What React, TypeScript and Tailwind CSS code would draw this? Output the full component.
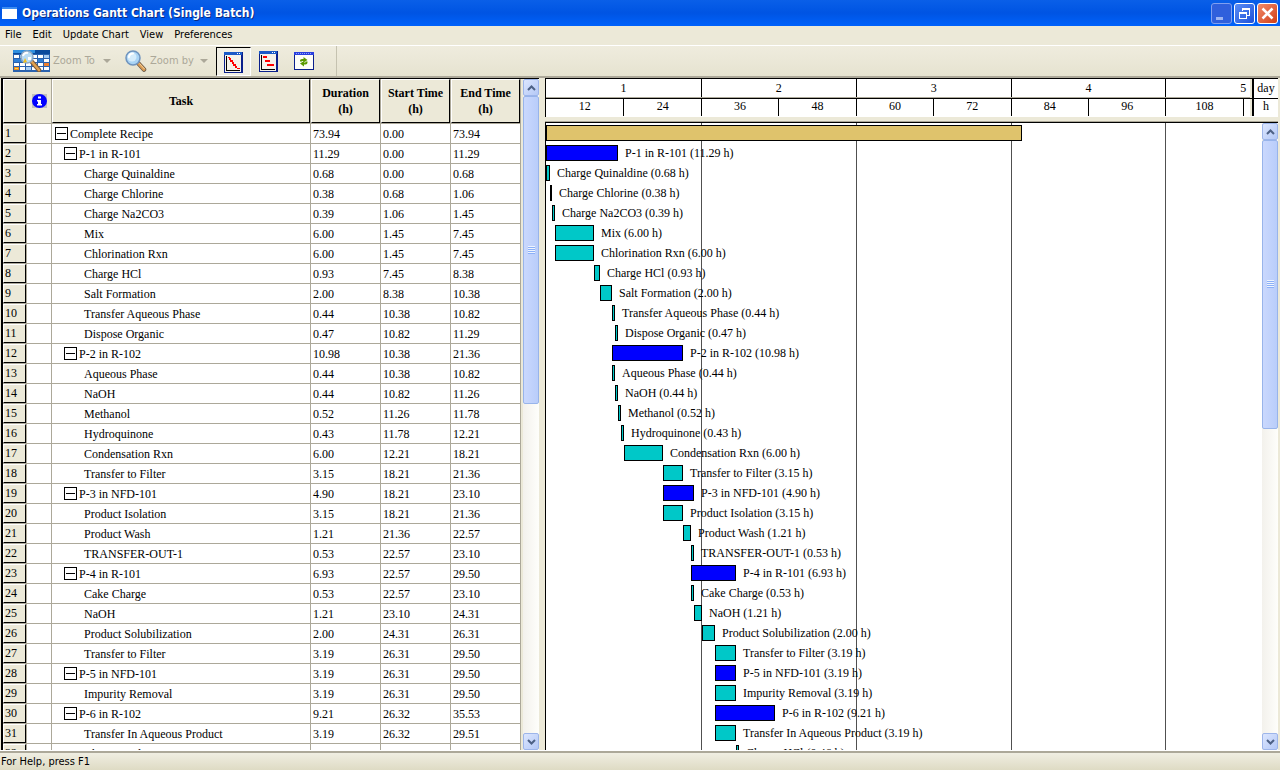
import React from 'react';

const PX_PER_HOUR = 6.45;
const HALF_DAY_WIDTH = 77.43;

interface Task {
  name: string;
  level: 0 | 1 | 2;
  duration: string;
  start: string;
  end: string;
}

const t = (level: 0 | 1 | 2, name: string, duration: string, start: string, end: string): Task => ({
  level,
  name,
  duration,
  start,
  end,
});

const TASKS: Task[] = [
  t(0, 'Complete Recipe', '73.94', '0.00', '73.94'),
  t(1, 'P-1 in R-101', '11.29', '0.00', '11.29'),
  t(2, 'Charge Quinaldine', '0.68', '0.00', '0.68'),
  t(2, 'Charge Chlorine', '0.38', '0.68', '1.06'),
  t(2, 'Charge Na2CO3', '0.39', '1.06', '1.45'),
  t(2, 'Mix', '6.00', '1.45', '7.45'),
  t(2, 'Chlorination Rxn', '6.00', '1.45', '7.45'),
  t(2, 'Charge HCl', '0.93', '7.45', '8.38'),
  t(2, 'Salt Formation', '2.00', '8.38', '10.38'),
  t(2, 'Transfer Aqueous Phase', '0.44', '10.38', '10.82'),
  t(2, 'Dispose Organic', '0.47', '10.82', '11.29'),
  t(1, 'P-2 in R-102', '10.98', '10.38', '21.36'),
  t(2, 'Aqueous Phase', '0.44', '10.38', '10.82'),
  t(2, 'NaOH', '0.44', '10.82', '11.26'),
  t(2, 'Methanol', '0.52', '11.26', '11.78'),
  t(2, 'Hydroquinone', '0.43', '11.78', '12.21'),
  t(2, 'Condensation Rxn', '6.00', '12.21', '18.21'),
  t(2, 'Transfer to Filter', '3.15', '18.21', '21.36'),
  t(1, 'P-3 in NFD-101', '4.90', '18.21', '23.10'),
  t(2, 'Product Isolation', '3.15', '18.21', '21.36'),
  t(2, 'Product Wash', '1.21', '21.36', '22.57'),
  t(2, 'TRANSFER-OUT-1', '0.53', '22.57', '23.10'),
  t(1, 'P-4 in R-101', '6.93', '22.57', '29.50'),
  t(2, 'Cake Charge', '0.53', '22.57', '23.10'),
  t(2, 'NaOH', '1.21', '23.10', '24.31'),
  t(2, 'Product Solubilization', '2.00', '24.31', '26.31'),
  t(2, 'Transfer to Filter', '3.19', '26.31', '29.50'),
  t(1, 'P-5 in NFD-101', '3.19', '26.31', '29.50'),
  t(2, 'Impurity Removal', '3.19', '26.31', '29.50'),
  t(1, 'P-6 in R-102', '9.21', '26.32', '35.53'),
  t(2, 'Transfer In Aqueous Product', '3.19', '26.32', '29.51'),
  t(2, 'Charge HCl', '0.46', '29.51', '29.97'),
];

const DAYS = [1, 2, 3, 4, 5];
const HOURS = [12, 24, 36, 48, 60, 72, 84, 96, 108, 120];
const MENUS = ['File', 'Edit', 'Update Chart', 'View', 'Preferences'];

const BAR_COLORS = ['bg-[#dfc36c]', 'bg-[#0000ff]', 'bg-[#00c8c8]'];
const INDENTS = ['pl-[3px]', 'pl-3', 'pl-8'];

function GanttZoomIcon() {
  return (
    <svg width="37" height="22" viewBox="0 0 37 22" shapeRendering="crispEdges">
      <rect width="37" height="22" fill="#2a62ae" />
      <rect width="37" height="4" fill="#0a4a9c" />
      <rect width="22" height="3" fill="#2f8fe0" />
      {[0, 1, 2, 3, 4, 5].map((c) =>
        [0, 1, 2, 3].map((r) => (
          <rect key={`${c}-${r}`} x={1 + c * 6} y={5 + r * 4} width="5" height="3" fill={(c + r) % 4 === 1 ? '#a9cdf0' : '#ffffff'} />
        ))
      )}
      <rect x="1" y="9" width="11" height="3" fill="#2f7fd6" />
      <rect x="25" y="9" width="5" height="3" fill="#2f7fd6" />
      <rect x="31" y="13" width="5" height="3" fill="#f08030" />
      <rect x="1" y="17" width="5" height="3" fill="#f08a20" />
      <rect x="2" y="18" width="3" height="1" fill="#f8e040" />
      <g shapeRendering="auto">
        <path d="M19 12l7 8" stroke="#7a5b3a" strokeWidth="4.500" strokeLinecap="round" />
        <path d="M19 12l7 8" stroke="#e0a050" strokeWidth="2.500" strokeLinecap="round" />
        <circle cx="14" cy="7" r="6" fill="#b9dcf4" stroke="#8fa9c4" strokeWidth="1.500" />
        <path d="M10 6a4 4 0 0 1 5-3" stroke="#fff" strokeWidth="2" fill="none" />
        <path d="M12 8l2 4-4 1z" fill="#f0c020" />
        <path d="M15 7h3v3h-3z" fill="#fff" />
      </g>
    </svg>
  );
}

function MagnifierIcon() {
  return (
    <svg width="22" height="22" viewBox="0 0 22 22">
      <path d="M13.500 13.500l5.500 6" stroke="#6b5a4a" strokeWidth="4.500" strokeLinecap="round" />
      <path d="M13.500 13.500l5.500 6" stroke="#d99a52" strokeWidth="3" strokeLinecap="round" />
      <path d="M14.500 13.500l5 5.500" stroke="#f6d29a" strokeWidth="1" />
      <circle cx="8" cy="8" r="7" fill="#a9d4f5" stroke="#6f93bd" strokeWidth="1.500" />
      <circle cx="7" cy="7" r="4.500" fill="#d5ecfb" />
      <path d="M4 7a4 4 0 0 1 4-3.500" stroke="#fff" strokeWidth="2" fill="none" strokeLinecap="round" />
    </svg>
  );
}

function ChartFrame({ children }: { children: React.ReactNode }) {
  return (
    <svg width="19" height="21" viewBox="0 0 19 21" shapeRendering="crispEdges">
      <rect width="19" height="21" fill="#0a1f8c" />
      <rect width="18" height="3" fill="#1a5ac8" />
      <rect x="13" y="1" width="1" height="1" fill="#fff" />
      <rect x="15" y="1" width="1" height="1" fill="#fff" />
      <rect x="1" y="3" width="16" height="17" fill="#f4f2ea" />
      <rect x="2" y="4" width="1" height="15" fill="#000" />
      <rect x="2" y="18" width="14" height="1" fill="#000" />
      {children}
    </svg>
  );
}

function DetailedChartIcon() {
  return (
    <ChartFrame>
      <path d="M4 5h2v1H4zM5 6h2v2H5zM6 8h3v2H6zM8 10h2v2H8zM9 12h3v2H9zM11 14h2v2h-2zM13 16h3v1h-3z" fill="#f00" />
    </ChartFrame>
  );
}

function SummaryChartIcon() {
  return (
    <ChartFrame>
      <rect x="4" y="5" width="4" height="2" fill="#f00" />
      <rect x="6" y="9" width="5" height="2" fill="#f00" />
      <rect x="8" y="13" width="7" height="2" fill="#f00" />
    </ChartFrame>
  );
}

function RefreshIcon() {
  return (
    <svg width="20" height="18" viewBox="0 0 20 18">
      <rect x="0.500" y="0.500" width="19" height="17" fill="#fdfdf8" stroke="#0a1f8c" />
      <rect width="20" height="3" fill="#2a3fe0" />
      <path d="M2 1.500h16" stroke="#8fa4f8" strokeDasharray="1 1" />
      <path d="M6 9.500V8.500Q6 7 8 7h1.500V5l4 3-4 2.500V9H8v0.500z" fill="#5a9a00" />
      <path d="M13.500 9.500v1q0 2-2 2H10v2l-4-3 4-2.500v1.500h1.500v-1z" fill="#5a9a00" />
    </svg>
  );
}

function DropArrow() {
  return (
    <svg width="8" height="4" viewBox="0 0 8 4">
      <path d="M0 0h8L4 4z" fill="#aca899" />
    </svg>
  );
}

function InfoIcon() {
  return (
    <svg width="15" height="14" viewBox="0 0 15 14" className="mx-auto">
      <rect width="15" height="14" fill="#c0c0c0" />
      <ellipse cx="7.500" cy="7" rx="7.500" ry="7" fill="#0000ff" />
      <path d="M6 2.500h3v2H6zM5 6h4v4h1v1.500H5V10h1V7.500H5z" fill="#fff" />
    </svg>
  );
}

function ScrollButton({ down, label }: { down?: boolean; label: string }) {
  return (
    <button
      type="button"
      aria-label={label}
      className="flex h-[17px] w-full shrink-0 items-center justify-center rounded-xs border border-[#9db5ea] bg-linear-to-br from-[#dce6fe] to-[#b4c8f6]"
    >
      <svg width="9" height="6" viewBox="0 0 9 6">
        <path d={down ? 'M1 1l3.500 3.500L8 1' : 'M1 5l3.500-3.500L8 5'} stroke="#4d6185" strokeWidth="2" fill="none" />
      </svg>
    </button>
  );
}

function ScrollBar({ name, thumb }: { name: string; thumb: string }) {
  return (
    <div className="flex w-4 shrink-0 flex-col bg-linear-to-r from-[#f3f1ec] to-[#fefefb]">
      <ScrollButton label={`${name} up`} />
      <div className="min-h-0 flex-1">
        <div className={`flex items-center justify-center rounded-xs border border-[#98b4ea] bg-linear-to-r from-[#cad8fd] to-[#b9cdfa] ${thumb}`}>
          <div className="flex flex-col gap-px">
            {[0, 1, 2, 3].map((i) => (
              <div key={i} className="h-px w-[7px] bg-[#8cb0f8] shadow-[0_-1px_0_#eef4fe]" />
            ))}
          </div>
        </div>
      </div>
      <ScrollButton down label={`${name} down`} />
    </div>
  );
}

function TitleBar() {
  const base = 'flex size-[21px] items-center justify-center rounded-[3px] border';
  return (
    <header className="flex h-[26px] shrink-0 items-center bg-linear-to-b from-[#0a5fe8] via-[#0054e3] to-[#0062fb] px-0.5">
      <svg width="15" height="12" viewBox="0 0 15 12" shapeRendering="crispEdges">
        <rect width="15" height="12" fill="#fff" />
        <rect width="15" height="2" fill="#3c8cf0" />
      </svg>
      <h1 className="ml-[5px] flex-1 font-['DejaVu_Sans_Condensed','Noto_Sans',sans-serif] text-[12px] font-bold text-white [text-shadow:1px_1px_#0a2a80]">
        Operations Gantt Chart (Single Batch)
      </h1>
      <div className="flex gap-0.5">
        <button type="button" aria-label="Minimize" className={`${base} border-[#7f9ff0] bg-[#2f5fdc]`}>
          <svg width="19" height="19" viewBox="0 0 19 19">
            <rect x="4" y="13" width="7" height="3" fill="#9db4f2" />
          </svg>
        </button>
        <button type="button" aria-label="Restore" className={`${base} border-white bg-linear-to-br from-[#5a8cf5] to-[#1f50d8]`}>
          <svg width="19" height="19" viewBox="0 0 19 19" fill="none" stroke="#fff" shapeRendering="crispEdges">
            <path d="M7.500 7V5.500h7v6H12M7 4.500h8M4.500 8.500h7v6h-7zM4 9.500h8" />
          </svg>
        </button>
        <button type="button" aria-label="Close" className={`${base} border-white bg-linear-to-br from-[#f08a68] to-[#d03c10]`}>
          <svg width="19" height="19" viewBox="0 0 19 19">
            <path d="M4.500 4.500l10 10M14.500 4.500l-10 10" stroke="#fff" strokeWidth="2.500" />
          </svg>
        </button>
      </div>
    </header>
  );
}

function Toolbar() {
  return (
    <div className="flex h-[31px] shrink-0 border-t border-white bg-linear-to-b from-[#efecde] to-[#e6e3d0]">
      <div className="flex items-center border-r border-[#c5c2b0] pr-[22px] pl-[13px] text-[#aca899]">
        <button type="button" disabled className="flex items-center">
          <GanttZoomIcon />
          <span className="ml-[3px] w-[50px] text-left">Zoom To</span>
          <DropArrow />
        </button>
        <button type="button" disabled className="ml-3.5 flex items-center">
          <MagnifierIcon />
          <span className="ml-[3px] w-[50px] text-left">Zoom by</span>
          <DropArrow />
        </button>
        <button
          type="button"
          aria-label="Detailed chart"
          aria-pressed="true"
          className="ml-2 flex h-[29px] w-[35px] items-center justify-center border border-t-black border-r-white border-b-white border-l-black bg-[#f1efe5] pt-0.5"
        >
          <DetailedChartIcon />
        </button>
        <button type="button" aria-label="Summary chart" className="ml-2 flex">
          <SummaryChartIcon />
        </button>
        <button type="button" aria-label="Refresh" className="ml-4 flex">
          <RefreshIcon />
        </button>
      </div>
    </div>
  );
}

function TaskTable() {
  const head = 'border-r border-b border-r-[#aca899] border-b-[#aca899] p-0';
  const headBox = 'flex h-11 items-center justify-center border-t border-r border-b border-l border-t-white border-l-white border-r-black border-b-black text-center leading-4';
  const cell = 'border-r border-b border-[#aca899] p-0';
  return (
    <table className="w-full table-fixed border-separate border-spacing-0 text-[12px] leading-4">
      <colgroup>
        <col className="w-6" />
        <col className="w-[25px]" />
        <col />
        <col className="w-[70px]" />
        <col className="w-[70px]" />
        <col className="w-[70px]" />
      </colgroup>
      <thead className="bg-[#ece9d8]">
        <tr>
          <th className={head} aria-label="Row">
            <div className={headBox} />
          </th>
          <th className={head} aria-label="Info">
            <InfoIcon />
          </th>
          <th className={head}>
            <div className={headBox}>Task</div>
          </th>
          {['Duration', 'Start Time', 'End Time'].map((label) => (
            <th key={label} className={head}>
              <div className={headBox}>
                {label}
                <br />
                (h)
              </div>
            </th>
          ))}
        </tr>
      </thead>
      <tbody>
        {TASKS.map((task, i) => (
          <tr key={i}>
            <th scope="row" className={`${cell} bg-[#ece9d8] text-left font-normal`}>
              <div className="h-[19px] border border-t-white border-r-black border-b-black border-l-white pl-px leading-4">{i + 1}</div>
            </th>
            <td className={cell} />
            <td className={cell}>
              <div className={`flex h-[19px] items-center gap-0.5 whitespace-nowrap ${INDENTS[task.level]}`}>
                {task.level < 2 && (
                  <button type="button" aria-label={`Collapse ${task.name}`} className="flex size-[13px] items-center justify-center border border-black">
                    <span className="h-px w-[9px] bg-black" />
                  </button>
                )}
                {task.name}
              </div>
            </td>
            <td className={`${cell} pl-0.5`}>{task.duration}</td>
            <td className={`${cell} pl-0.5`}>{task.start}</td>
            <td className={`${cell} pl-0.5`}>{task.end}</td>
          </tr>
        ))}
      </tbody>
    </table>
  );
}

function UnitCell({ children }: { children: React.ReactNode }) {
  return (
    <div className="w-7 shrink-0 border-l-2 border-[#ece9d8]">
      <div className="h-full border-l-2 border-black text-center">{children}</div>
    </div>
  );
}

function TimeScale() {
  return (
    <div className="shrink-0 border-t border-l border-black bg-white text-[12px]">
      <div className="flex h-5 border-b border-black leading-[18px]">
        <div className="flex min-w-0 flex-1 overflow-hidden border-b border-[#aca899]">
          {DAYS.map((day) => (
            <div
              key={day}
              className="shrink-0 border-l border-black text-center first:border-l-0"
              style={{ width: 2 * HALF_DAY_WIDTH }}
            >
              {day}
            </div>
          ))}
        </div>
        <UnitCell>day</UnitCell>
      </div>
      <div className="flex h-[18px] border-b border-white leading-[14px]">
        <div className="flex min-w-0 flex-1 overflow-hidden">
          {HOURS.map((hour) => (
            <div
              key={hour}
              className="shrink-0 border-l border-black text-center first:border-l-0"
              style={{ width: HALF_DAY_WIDTH }}
            >
              {/* the last half day starts at the edge, only its tick fits */}
              {hour < 120 && hour}
            </div>
          ))}
        </div>
        <UnitCell>h</UnitCell>
      </div>
    </div>
  );
}

function Bar({ task }: { task: Task }) {
  const left = Math.floor(Number(task.start) * PX_PER_HOUR);
  const right = Math.floor(Number(task.end) * PX_PER_HOUR);
  return (
    <div className="flex h-5 items-center whitespace-nowrap">
      <div
        className={`h-4 shrink-0 border border-black ${BAR_COLORS[task.level]}`}
        style={{ marginLeft: left, width: right - left }}
      />
      {task.level > 0 && (
        <span className="ml-[7px]">
          {task.name} ({task.duration} h)
        </span>
      )}
    </div>
  );
}

function Chart() {
  return (
    <div className="grid min-w-0 flex-1 content-start overflow-hidden text-[12px] leading-4">
      <div className="flex [grid-area:1/1]">
        {DAYS.map((day) => (
          <div
            key={day}
            className="shrink-0 border-l border-[#505050] first:border-l-0"
            style={{ width: 2 * HALF_DAY_WIDTH }}
          />
        ))}
      </div>
      <div className="[grid-area:1/1]">
        {TASKS.map((task, i) => (
          <Bar key={i} task={task} />
        ))}
      </div>
    </div>
  );
}

export default function App() {
  return (
    <div className="flex h-screen flex-col overflow-hidden bg-[#ece9d8] font-['DejaVu_Sans_Condensed','Noto_Sans',sans-serif] text-[11px] text-black">
      <TitleBar />
      <nav className="flex h-[19px] shrink-0 items-center gap-[11px] pl-[5px]">
        {MENUS.map((m) => (
          <button key={m} type="button">
            {m}
          </button>
        ))}
      </nav>
      <Toolbar />
      <main className="flex min-h-0 flex-1 overflow-hidden border-t-2 border-[#aca899] pl-px font-['Liberation_Serif','Times_New_Roman',serif]">
        <section className="flex w-[538px] shrink-0 overflow-hidden border-t border-l-2 border-black bg-white">
          <div className="min-w-0 flex-1 overflow-hidden">
            <TaskTable />
          </div>
          <div className="flex border-l-2 border-[#ece9d8]">
            <ScrollBar name="Scroll tasks" thumb="h-[308px]" />
          </div>
        </section>
        <section className="ml-1.5 flex min-w-0 flex-1 flex-col pr-0.5">
          <TimeScale />
          <div className="mt-1 flex min-h-0 flex-1 flex-col border-t border-[#aca899]">
            <div className="flex min-h-0 flex-1 border-t border-l border-black bg-white">
              <Chart />
              <ScrollBar name="Scroll chart" thumb="h-[289px]" />
            </div>
          </div>
        </section>
      </main>
      <footer className="shrink-0 border-t border-white">
        <p className="flex h-[19px] items-center border-t-2 border-[#aca899] bg-linear-to-b from-[#f0eee2] to-[#dedbc4] pt-0.5 pl-px">
          For Help, press F1
        </p>
      </footer>
    </div>
  );
}
